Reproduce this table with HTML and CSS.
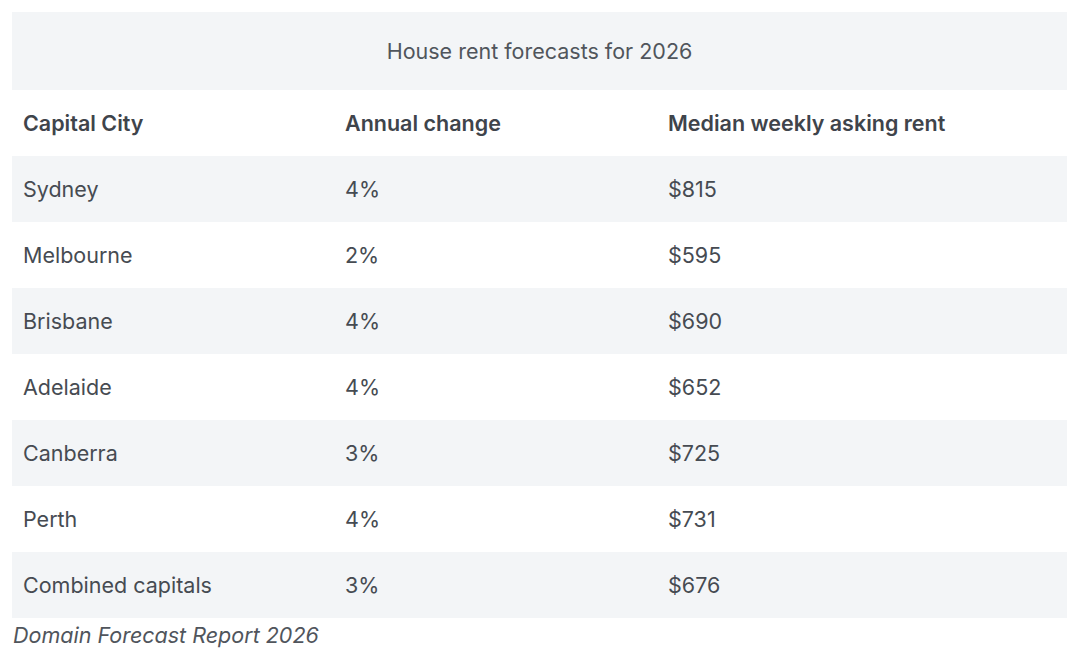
FILE: index.html
```html
<!DOCTYPE html>
<html lang="en">
<head>
<meta charset="utf-8">
<link rel="stylesheet" href="styles.css">
<title>House rent forecasts for 2026</title>
</head>
<body>
<figure class="figure">
  <table class="rent-table">
    <caption class="table-title">House rent forecasts for 2026</caption>
    <colgroup>
      <col class="col-city">
      <col class="col-change">
      <col class="col-rent">
    </colgroup>
    <thead>
      <tr class="head-row">
        <th>Capital City</th>
        <th>Annual change</th>
        <th>Median weekly asking rent</th>
      </tr>
    </thead>
    <tbody>
      <tr class="row shaded"><td>Sydney</td><td>4%</td><td>$815</td></tr>
      <tr class="row"><td>Melbourne</td><td>2%</td><td>$595</td></tr>
      <tr class="row shaded"><td>Brisbane</td><td>4%</td><td>$690</td></tr>
      <tr class="row"><td>Adelaide</td><td>4%</td><td>$652</td></tr>
      <tr class="row shaded"><td>Canberra</td><td>3%</td><td>$725</td></tr>
      <tr class="row"><td>Perth</td><td>4%</td><td>$731</td></tr>
      <tr class="row shaded"><td>Combined capitals</td><td>3%</td><td>$676</td></tr>
    </tbody>
  </table>
  <figcaption class="source">Domain Forecast Report 2026</figcaption>
</figure>
</body>
</html>
```

FILE: styles.css
```css
html, body {
  margin: 0;
  padding: 0;
  background: #ffffff;
}

body {
  font-family: Inter, "Noto Sans", "Liberation Sans", sans-serif;
  color: #464b52;
}

.figure {
  margin: 0;
  padding: 12px 13px 0 12px;
}

.rent-table {
  width: 1055px;
  border-collapse: collapse;
  border-spacing: 0;
  font-size: 21.5px;
}

.table-title {
  background: #f3f5f7;
  height: 78px;
  line-height: 78px;
  text-align: center;
  font-size: 21.5px;
  color: #50555c;
  caption-side: top;
}

.col-city { width: 322px; }
.col-change { width: 323px; }
.col-rent { width: auto; }

.head-row th {
  height: 66px;
  padding: 0 11px;
  text-align: left;
  font-weight: 600;
  color: #3f444b;
  box-sizing: border-box;
}

.row td {
  height: 66px;
  padding: 0 11px;
  text-align: left;
  font-weight: 400;
  box-sizing: border-box;
}

.row.shaded {
  background: #f3f5f7;
}

.source {
  margin-top: 3px;
  padding-left: 1px;
  font-style: italic;
  font-size: 21.5px;
  line-height: 28px;
  color: #50555c;
}
```
